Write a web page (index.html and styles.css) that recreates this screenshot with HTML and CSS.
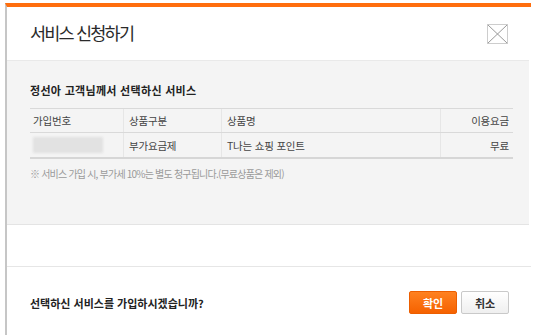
FILE: index.html
```html
<!DOCTYPE html>
<html lang="ko">
<head>
    <meta charset="UTF-8">
    <title>서비스 신청하기</title>
    <link rel="stylesheet" href="styles.css">
</head>
<body>
    <div class="modal">
        <div class="modal-head">
            <h1>서비스 신청하기</h1>
            <a class="close" href="#" title="닫기">
                <svg width="21" height="20" viewBox="0 0 21 20">
                    <rect x="0.5" y="0.5" width="20" height="19" fill="none" stroke="#9a9a9a" stroke-dasharray="1 1"/>
                    <path d="M1 1 L20 19 M20 1 L1 19" stroke="#9a9a9a" stroke-width="1" fill="none"/>
                </svg>
            </a>
        </div>

        <div class="panel">
            <h2>정선아 고객님께서 선택하신 서비스</h2>
            <table class="svc-table">
                <thead>
                    <tr>
                        <th class="col-no">가입번호</th>
                        <th class="col-type">상품구분</th>
                        <th class="col-name">상품명</th>
                        <th class="col-fee">이용요금</th>
                    </tr>
                </thead>
                <tbody>
                    <tr>
                        <td class="col-no"><span class="masked"></span></td>
                        <td class="col-type">부가요금제</td>
                        <td class="col-name">T나는 쇼핑 포인트</td>
                        <td class="col-fee">무료</td>
                    </tr>
                </tbody>
            </table>
            <p class="note">※ 서비스 가입 시, 부가세 10%는 별도 청구됩니다.(무료상품은 제외)</p>
        </div>

        <div class="spacer"></div>

        <div class="modal-foot">
            <p class="confirm-text">선택하신 서비스를 가입하시겠습니까?</p>
            <div class="buttons">
                <button class="btn btn-ok">확인</button>
                <button class="btn btn-cancel">취소</button>
            </div>
        </div>
    </div>
</body>
</html>
```

FILE: styles.css
```css
body {
    margin: 0;
    padding-top: 3px;
    background-color: #fff;
    font-family: "Noto Sans CJK KR", "Liberation Sans", sans-serif;
    color: #333;
}
.modal {
    margin-left: 5px;
    width: 526px;
    height: 332px;
    border-top: 4px solid #ff6e0e;
    border-left: 2px solid #c6c6c6;
    box-sizing: border-box;
}
.modal-head {
    height: 53px;
    display: flex;
    align-items: center;
    justify-content: space-between;
    padding: 0 23px 0 23px;
}
.modal-head h1 {
    margin: 0;
    font-size: 17.5px;
    line-height: 20px;
    font-weight: normal;
    color: #2a2a2a;
    letter-spacing: -1.8px;
    margin-top: -1px;
}
.close {
    display: block;
    width: 21px;
    height: 20px;
}
.close svg {
    display: block;
}
.panel {
    background-color: #f4f4f4;
    border-top: 1px solid #e9e9e9;
    border-bottom: 1px solid #e4e4e4;
    margin-right: 2px;
    height: 165px;
    box-sizing: border-box;
    padding: 21px 15px 0 23px;
}
.panel h2 {
    margin: 0 0 10px 0;
    font-size: 11px;
    line-height: 16px;
    font-weight: bold;
    color: #222;
    letter-spacing: 0.3px;
}
.svc-table {
    width: 483px;
    border-collapse: collapse;
    font-size: 10.5px;
    color: #444;
}
.svc-table th,
.svc-table td {
    font-weight: normal;
    text-align: left;
    padding: 0 5px;
    border-left: 1px solid #e6e6e6;
    letter-spacing: -0.2px;
}
.svc-table th {
    height: 23px;
    border-top: 1px solid #d9d9d9;
    border-bottom: 1px solid #d9d9d9;
}
.svc-table td {
    height: 24px;
    border-bottom: 2px solid #d6d6d6;
}
.svc-table .col-no {
    width: 85px;
    border-left: none;
    padding-left: 3px;
}
.svc-table .col-type {
    width: 87px;
}
.svc-table .col-name {
    width: 208px;
}
.svc-table .col-fee {
    text-align: right;
    padding-right: 4px;
}
.masked {
    display: block;
    width: 70px;
    height: 16px;
    background-color: #e2e2e2;
    filter: blur(1px);
}
.note {
    margin: 7px 0 0 0;
    font-size: 10px;
    line-height: 16px;
    color: #9a9a9a;
    letter-spacing: -0.8px;
}
.spacer {
    height: 41px;
    border-bottom: 1px solid #e6e6e6;
}
.modal-foot {
    display: flex;
    align-items: center;
    justify-content: space-between;
    padding: 24px 22px 0 23px;
}
.confirm-text {
    margin: 0;
    font-size: 11px;
    font-weight: bold;
    color: #222;
    letter-spacing: 0;
}
.buttons {
    display: flex;
    gap: 4px;
}
.btn {
    width: 48px;
    height: 23px;
    padding: 0;
    border-radius: 2px;
    font-family: "Noto Sans CJK KR", "Liberation Sans", sans-serif;
    font-size: 11px;
    font-weight: bold;
    cursor: pointer;
}
.btn-ok {
    color: #fff;
    background: linear-gradient(#ff8120, #f56200);
    border: 1px solid #ec5e00;
}
.btn-cancel {
    color: #333;
    background: linear-gradient(#fff, #efefef);
    border: 1px solid #c9c9c9;
}
```
